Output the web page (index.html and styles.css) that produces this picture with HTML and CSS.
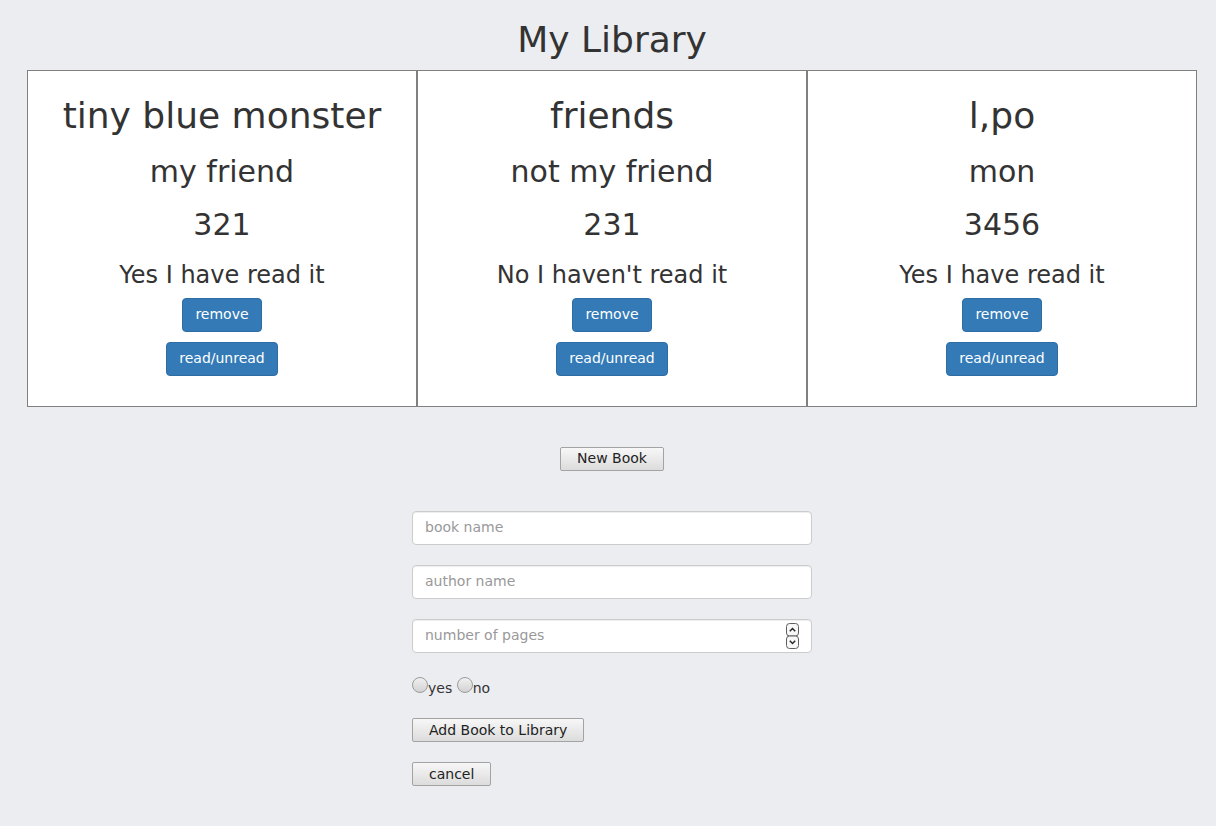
FILE: index.html
```html
<!DOCTYPE html>
<html lang="en">
<head>
<meta charset="utf-8">
<title>My Library</title>
<link rel="stylesheet" href="styles.css">
</head>
<body>
<div class="page">
  <h1 class="title">My Library</h1>

  <div class="cards">
    <div class="card">
      <h1 class="book-title">tiny blue monster</h1>
      <h2 class="book-line">my friend</h2>
      <h2 class="book-line">321</h2>
      <h3 class="book-status">Yes I have read it</h3>
      <div class="actions">
        <button class="btn-primary">remove</button>
        <button class="btn-primary">read/unread</button>
      </div>
    </div>
    <div class="card">
      <h1 class="book-title">friends</h1>
      <h2 class="book-line">not my friend</h2>
      <h2 class="book-line">231</h2>
      <h3 class="book-status">No I haven't read it</h3>
      <div class="actions">
        <button class="btn-primary">remove</button>
        <button class="btn-primary">read/unread</button>
      </div>
    </div>
    <div class="card">
      <h1 class="book-title">l,po</h1>
      <h2 class="book-line">mon</h2>
      <h2 class="book-line">3456</h2>
      <h3 class="book-status">Yes I have read it</h3>
      <div class="actions">
        <button class="btn-primary">remove</button>
        <button class="btn-primary">read/unread</button>
      </div>
    </div>
  </div>

  <button class="btn-default new-book">New Book</button>

  <form class="book-form">
    <div class="field">
      <input class="form-control" type="text" placeholder="book name">
    </div>
    <div class="field">
      <input class="form-control" type="text" placeholder="author name">
    </div>
    <div class="field number-field">
      <input class="form-control" type="number" placeholder="number of pages">
      <svg class="spinner" width="13" height="26" viewBox="0 0 13 26" aria-hidden="true">
        <rect x="0.5" y="0.5" width="12" height="12.5" rx="3" fill="#f7f7f7" stroke="#5e5e5e"/>
        <rect x="0.5" y="13" width="12" height="12.5" rx="3" fill="#f7f7f7" stroke="#5e5e5e"/>
        <path d="M3.8 8.2 L6.5 5.5 L9.2 8.2" fill="none" stroke="#222" stroke-width="1.4"/>
        <path d="M3.8 17.8 L6.5 20.5 L9.2 17.8" fill="none" stroke="#222" stroke-width="1.4"/>
      </svg>
    </div>
    <div class="radios">
      <input class="radio" type="radio" name="read" id="read-yes"><label for="read-yes">yes</label>
      <input class="radio" type="radio" name="read" id="read-no"><label for="read-no">no</label>
    </div>
    <button type="button" class="btn-default form-btn">Add Book to Library</button>
    <button type="button" class="btn-default form-btn">cancel</button>
  </form>
</div>
</body>
</html>
```

FILE: styles.css
```css
* {
  box-sizing: border-box;
}

html, body {
  margin: 0;
  background: #ecedf0;
}

body {
  font-family: "DejaVu Sans", sans-serif;
  font-size: 14px;
  line-height: 1.42857;
  color: #333;
}

.page {
  width: 1170px;
  margin-left: 27px;
}

.title {
  font-size: 36px;
  font-weight: normal;
  line-height: 1.1;
  margin: 20px 0 10px;
  text-align: center;
}

.cards {
  display: flex;
}

.card {
  width: 390px;
  background: #fff;
  border: 1px solid #808080;
  padding: 5px 0 20px;
  text-align: center;
}

.book-title {
  font-size: 36px;
  font-weight: normal;
  line-height: 1.1;
  margin: 20px 0 10px;
}

.book-line {
  font-size: 30px;
  font-weight: normal;
  line-height: 1.1;
  margin: 20px 0 10px;
}

.book-status {
  font-size: 24px;
  font-weight: normal;
  line-height: 1.1;
  margin: 21px 0 9px;
}

.actions {
  display: flex;
  flex-direction: column;
  align-items: center;
  gap: 10px;
  margin-bottom: 10px;
}

.btn-primary {
  font-family: inherit;
  font-size: 14px;
  line-height: 20px;
  padding: 5px 12px 7px;
  color: #fff;
  background: #337ab7;
  border: 1px solid #2e6da4;
  border-radius: 4px;
  cursor: pointer;
}

.btn-default {
  display: block;
  font-family: inherit;
  font-size: 14px;
  line-height: 20px;
  height: 24px;
  padding: 0 16px 2px;
  color: #222;
  background: linear-gradient(#f7f7f7, #dcdcdc);
  border: 1px solid #a3a3a3;
  border-radius: 2px;
  cursor: pointer;
}

.new-book {
  margin: 40px auto 0;
}

.book-form {
  width: 400px;
  margin: 40px auto 0;
}

.field {
  margin-bottom: 20px;
}

.number-field {
  position: relative;
}

.form-control {
  display: block;
  width: 100%;
  height: 34px;
  padding: 5px 12px 7px;
  font-family: inherit;
  font-size: 14px;
  line-height: 20px;
  color: #555;
  background: #fff;
  border: 1px solid #ccc;
  border-radius: 4px;
  box-shadow: inset 0 1px 1px rgba(0, 0, 0, 0.075);
  outline: none;
}

.form-control::placeholder {
  color: #999;
}

.form-control::-webkit-inner-spin-button,
.form-control::-webkit-outer-spin-button {
  -webkit-appearance: none;
  margin: 0;
}

.spinner {
  position: absolute;
  right: 13px;
  top: 4px;
}

.radios {
  margin-bottom: 20px;
  line-height: 20px;
}

.radio {
  -webkit-appearance: none;
  appearance: none;
  width: 16px;
  height: 16px;
  margin: 4px 0 0;
  border: 1px solid #9c9c9c;
  border-radius: 50%;
  background: linear-gradient(#f0f0f0, #d2d2d2);
  vertical-align: baseline;
}

.form-btn {
  margin-bottom: 20px;
  padding: 1px 16px;
}
```
